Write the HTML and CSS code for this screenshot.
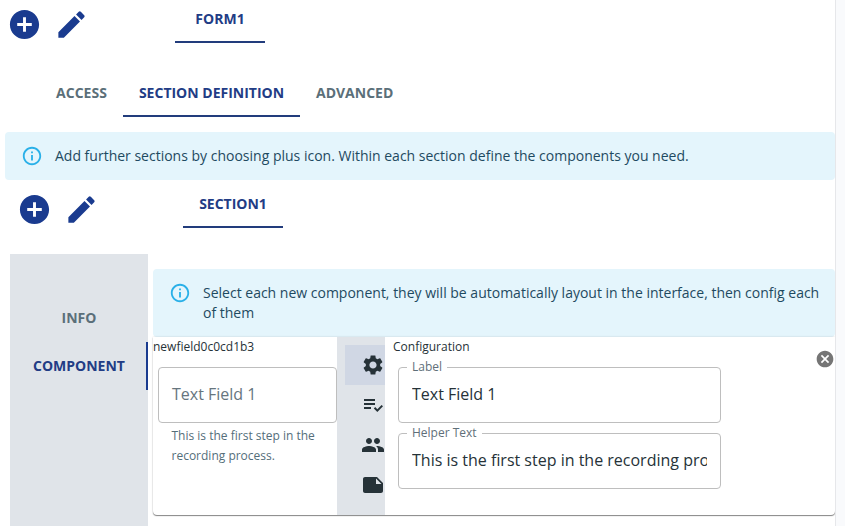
FILE: index.html
```html
<!DOCTYPE html>
<html lang="en">
<head>
<meta charset="utf-8">
<title>Form definition</title>
<link rel="stylesheet" href="styles.css">
</head>
<body>
<svg class="defs" aria-hidden="true">
  <symbol id="add" viewBox="0 0 24 24"><path d="M12 2C6.48 2 2 6.48 2 12s4.48 10 10 10 10-4.48 10-10S17.52 2 12 2zm5 11h-4v4h-2v-4H7v-2h4V7h2v4h4v2z"/></symbol>
  <symbol id="edit" viewBox="0 0 24 24"><path d="M3 17.25V21h3.75L17.81 9.94l-3.75-3.75L3 17.25zM20.71 7.04c.39-.39.39-1.02 0-1.41l-2.34-2.34a.9959.9959 0 0 0-1.41 0l-1.83 1.83 3.75 3.75 1.83-1.83z"/></symbol>
  <symbol id="info" viewBox="0 0 24 24"><path d="M11 7h2v2h-2zm0 4h2v6h-2zm1-9C6.48 2 2 6.48 2 12s4.48 10 10 10 10-4.48 10-10S17.52 2 12 2zm0 18c-4.41 0-8-3.59-8-8s3.59-8 8-8 8 3.59 8 8-3.59 8-8 8z"/></symbol>
</svg>
<main class="page">
  <header class="bar bar-form">
    <div class="actions">
      <svg class="action"><use href="#add"/></svg>
      <svg class="action"><use href="#edit"/></svg>
    </div>
    <div class="tab active tab-form">FORM1</div>
  </header>
  <nav class="tabs">
    <div class="tab tab-access">ACCESS</div>
    <div class="tab active tab-definition">SECTION DEFINITION</div>
    <div class="tab">ADVANCED</div>
  </nav>
  <div class="alert">
    <svg class="info"><use href="#info"/></svg>
    <p>Add further sections by choosing plus icon. Within each section define the components you need.</p>
  </div>
  <div class="bar bar-section">
    <div class="actions">
      <svg class="action"><use href="#add"/></svg>
      <svg class="action"><use href="#edit"/></svg>
    </div>
    <div class="tab active tab-section">SECTION1</div>
  </div>
  <section class="section">
    <nav class="side">
      <div class="side-tab">INFO</div>
      <div class="side-tab active">COMPONENT</div>
    </nav>
    <div class="content">
      <div class="alert alert-tall">
        <svg class="info"><use href="#info"/></svg>
        <p>Select each new component, they will be automatically layout in the interface, then config each of them</p>
      </div>
      <div class="card">
        <div class="preview">
          <div class="caption">newfield0c0cd1b3</div>
          <div class="field placeholder">Text Field 1</div>
          <p class="helper">This is the first step in the recording process.</p>
        </div>
        <div class="rail">
          <div class="rail-item selected"><svg viewBox="0 0 24 24"><path d="M19.14 12.94c.04-.3.06-.61.06-.94 0-.32-.02-.64-.07-.94l2.03-1.58c.18-.14.23-.41.12-.61l-1.92-3.32c-.12-.22-.37-.29-.59-.22l-2.39.96c-.5-.38-1.03-.7-1.62-.94l-.36-2.54c-.04-.24-.24-.41-.48-.41h-3.84c-.24 0-.43.17-.47.41l-.36 2.54c-.59.24-1.13.57-1.62.94l-2.39-.96c-.22-.08-.47 0-.59.22L2.74 8.87c-.12.21-.08.47.12.61l2.03 1.58c-.05.3-.09.63-.09.94s.02.64.07.94l-2.03 1.58c-.18.14-.23.41-.12.61l1.92 3.32c.12.22.37.29.59.22l2.39-.96c.5.38 1.03.7 1.62.94l.36 2.54c.05.24.24.41.48.41h3.84c.24 0 .44-.17.47-.41l.36-2.54c.59-.24 1.13-.56 1.62-.94l2.39.96c.22.08.47 0 .59-.22l1.92-3.32c.12-.22.07-.47-.12-.61l-2.01-1.58zM12 15.6c-1.98 0-3.6-1.62-3.6-3.6s1.62-3.6 3.6-3.6 3.6 1.62 3.6 3.6-1.62 3.6-3.6 3.6z"/></svg></div>
          <div class="rail-item"><svg viewBox="0 0 24 24"><path d="M3 10h11v2H3zm0-4h11v2H3zm0 8h7v2H3zm17.59-2.07-4.25 4.24-2.12-2.12-1.41 1.41L16.34 19 22 13.34z"/></svg></div>
          <div class="rail-item"><svg viewBox="0 0 24 24"><path d="M16 11c1.66 0 2.99-1.34 2.99-3S17.66 5 16 5c-1.66 0-3 1.34-3 3s1.34 3 3 3zm-8 0c1.66 0 2.99-1.34 2.99-3S9.66 5 8 5C6.34 5 5 6.34 5 8s1.34 3 3 3zm0 2c-2.33 0-7 1.17-7 3.5V19h14v-2.5c0-2.33-4.67-3.5-7-3.5zm8 0c-.29 0-.62.02-.97.05 1.16.84 1.97 1.97 1.97 3.45V19h6v-2.5c0-2.33-4.67-3.5-7-3.5z"/></svg></div>
          <div class="rail-item"><svg viewBox="0 0 24 24"><path d="M22 10l-6-6H4c-1.1 0-2 .9-2 2v12.01c0 1.1.9 1.99 2 1.99l16-.01c1.1 0 2-.89 2-1.99v-8zm-7-4.5l5.5 5.5H15V5.5z"/></svg></div>
        </div>
        <div class="config">
          <div class="caption">Configuration</div>
          <fieldset class="field"><legend>Label</legend><div class="value">Text Field 1</div></fieldset>
          <fieldset class="field"><legend>Helper Text</legend><div class="value">This is the first step in the recording process.</div></fieldset>
        </div>
        <svg class="close" viewBox="0 0 24 24"><path d="M12 2C6.47 2 2 6.47 2 12s4.47 10 10 10 10-4.47 10-10S17.53 2 12 2zm5 13.59L15.59 17 12 13.41 8.41 17 7 15.59 10.59 12 7 8.41 8.41 7 12 10.59 15.59 7 17 8.41 13.41 12 17 15.59z"/></svg>
      </div>
    </div>
  </section>
</main>
</body>
</html>
```
FILE: styles.css
```css
* { box-sizing: border-box; }
body {
  margin: 0;
  height: 526px;
  overflow: hidden;
  background: #f9fafc;
  color: #263238;
  font: 14px/20px "Open Sans", "Noto Sans", sans-serif;
}
p { margin: 0; }
svg { display: block; fill: currentColor; flex: none; }
.defs { width: 0; height: 0; position: absolute; }
.page {
  width: 836px;
  height: 526px;
  overflow: hidden;
  background: #fff;
  border-right: 1px solid #e6e7ea;
}
.bar { display: flex; }
.bar-form { height: 69px; padding-left: 7px; }
.bar-section { height: 74px; padding-left: 17px; }
.actions {
  display: flex;
  gap: 12px;
  color: #1a3b8f;
  padding-top: 7px;
}
.bar-section .actions { padding-top: 12px; }
.action { width: 35px; height: 35px; }
.tab {
  height: 48px;
  padding: 0 16px;
  font-weight: 700;
  line-height: 48px;
  text-align: center;
  white-space: nowrap;
  color: #5b6f79;
}
.tab.active { color: #223c85; border-bottom: 2px solid #223c7c; }
.tab-form { width: 90px; margin: -5px 0 0 86px; }
.tab-section { width: 100px; margin-left: 84px; }
.tab-access { width: 83px; }
.tab-definition { width: 177px; padding: 0; }
.tabs { display: flex; height: 63px; padding-left: 40px; }
.alert {
  display: flex;
  gap: 12px;
  height: 48px;
  margin-left: 5px;
  padding: 14px 10px 14px 16px;
  border-radius: 4px;
  background: #e4f5fc;
  color: #1e4a61;
}
.info { width: 22px; height: 22px; color: #29b0e8; margin-top: -1px; }
.section { display: flex; height: 272px; }
.side {
  width: 138px;
  margin-left: 10px;
  padding-top: 40px;
  background: #e0e4e9;
}
.side-tab {
  height: 48px;
  padding-left: 2px;
  font-weight: 700;
  line-height: 48px;
  text-align: center;
  color: #5b6f79;
  border-right: 2px solid transparent;
}
.side-tab.active { color: #223c85; border-right-color: #1a3b8f; }
.content { width: 682px; margin: 15px 0 0 5px; }
.alert-tall { height: 68px; margin-left: 0; }
.card {
  display: flex;
  height: 178px;
  border-radius: 0 0 4px 4px;
  box-shadow: 0 1px 1px rgba(0, 0, 0, 0.45), 0 0 2px rgba(0, 0, 0, 0.18);
}
.caption { font-size: 12px; line-height: 20px; }
.preview { width: 184px; }
.field {
  height: 56px;
  border: 1px solid #bebebe;
  border-radius: 4px;
  font-size: 16px;
  color: #263238;
}
.placeholder {
  margin: 10px 0 0 5px;
  padding: 0 13px;
  line-height: 53px;
  color: #66757e;
}
.helper {
  padding: 3px 8px 0 18.5px;
  font-size: 12px;
  line-height: 20px;
  color: #546e7a;
}
.rail {
  width: 48px;
  padding: 8px 0 0 8px;
  background: #e0e4e9;
}
.rail-item { height: 40px; padding: 8px 0 0 16px; color: #263238; }
.rail-item.selected { background: #d0d7e4; }
.rail-item svg { width: 24px; height: 24px; }
.config { width: 336px; padding-left: 8px; }
.config fieldset {
  width: 323px;
  min-width: 0;
  height: 62px;
  margin: 4px 0 0 5px;
  padding: 0 13px;
}
.config legend {
  margin-left: -5px;
  padding: 0 5px;
  font-size: 12px;
  line-height: 12px;
  color: #5f6f79;
}
.config .value {
  height: 34px;
  padding-top: 9px;
  line-height: 24px;
  white-space: nowrap;
  overflow: hidden;
}
.close { width: 20px; height: 20px; margin: 12px 0 0 94px; color: #757575; }
```
